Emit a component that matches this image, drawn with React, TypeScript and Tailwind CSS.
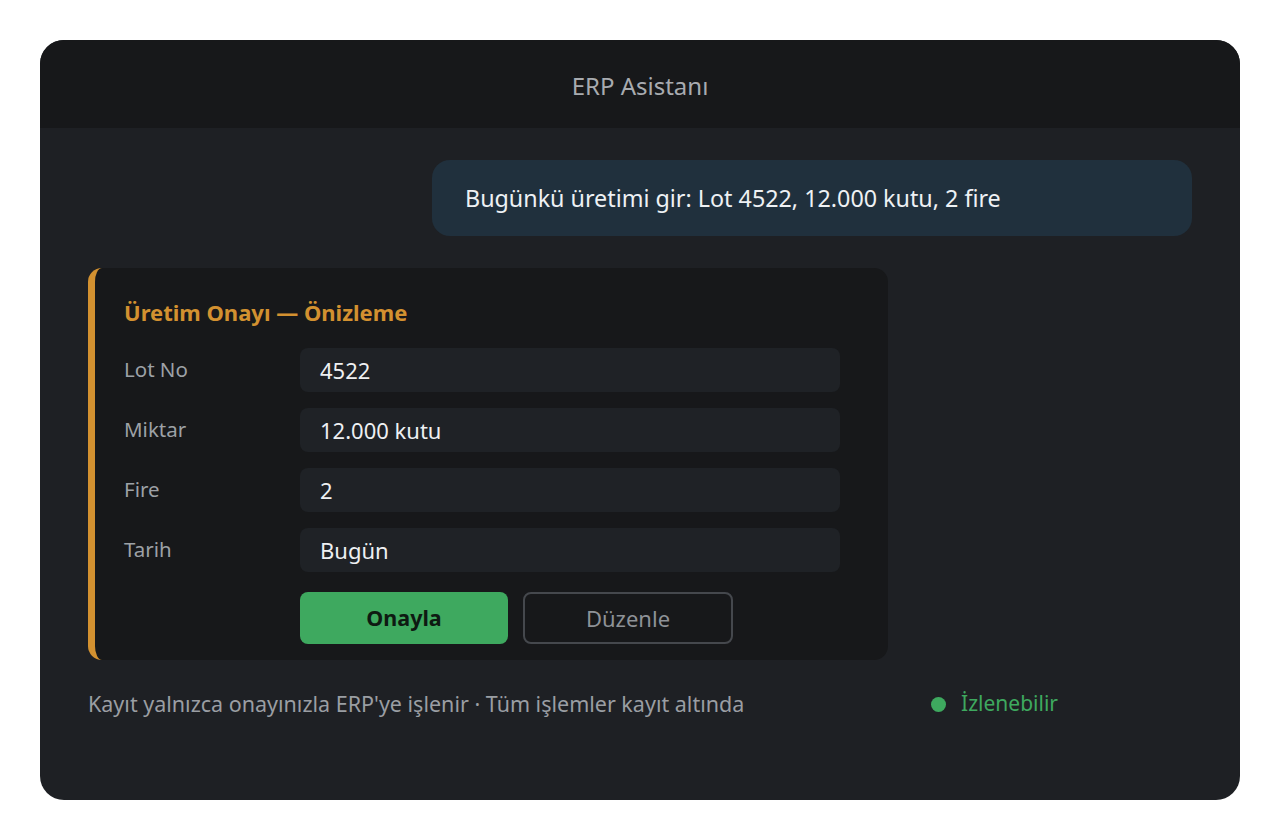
export default function App() {
  const rows = [
    { label: "Lot No", value: "4522" },
    { label: "Miktar", value: "12.000 kutu" },
    { label: "Fire", value: "2" },
    { label: "Tarih", value: "Bugün" },
  ];
  return (
    <div
      className="w-[1280px] h-[840px] bg-white p-10"
      style={{ fontFamily: '"Noto Sans", sans-serif' }}
    >
      <div className="w-full h-full rounded-[24px] overflow-hidden bg-[#1e2024] flex flex-col">
        <div className="h-[88px] shrink-0 bg-[#17181a] flex items-center justify-center">
          <span className="text-[24px] text-[#a8abb0] leading-none mt-[3px]">ERP Asistanı</span>
        </div>
        <div className="flex flex-col px-12 pt-8">
          <div className="flex justify-end">
            <div className="w-[760px] h-[76px] rounded-[18px] bg-[#20303d] flex items-center px-[33px]">
              <span className="text-[23.3px] text-[#eef1f4] leading-none mt-[2px]">
                Bugünkü üretimi gir: Lot 4522, 12.000 kutu, 2 fire
              </span>
            </div>
          </div>
          <div className="mt-8 w-[800px] rounded-[14px] border-l-[7px] border-[#d39130] bg-[#17181a] pl-[29px] pr-12 pt-[28px] pb-4">
            <div className="text-[22px] font-bold text-[#d39130] leading-[32px]">
              Üretim Onayı — Önizleme
            </div>
            <div className="mt-[20px] flex flex-col gap-4">
              {rows.map((r) => (
                <div key={r.label} className="flex items-center">
                  <div className="w-[176px] text-[20.5px] text-[#9da1a6] -mt-[2px]">
                    {r.label}
                  </div>
                  <div className="flex-1 h-[44px] rounded-[8px] bg-[#1f2226] flex items-center px-5">
                    <span className="text-[22px] text-[#eef0f2]">{r.value}</span>
                  </div>
                </div>
              ))}
            </div>
            <div className="mt-[20px] flex gap-[15px] pl-[176px]">
              <button className="w-[208px] h-[52px] rounded-[8px] bg-[#3ea95f] text-[21.5px] font-bold text-[#0e1a12]">
                Onayla
              </button>
              <button className="w-[210px] h-[52px] rounded-[8px] border-2 border-[#45484d] text-[22px] text-[#8e9297]">
                Düzenle
              </button>
            </div>
          </div>
          <div className="mt-[28px] w-[970px] flex items-center justify-between">
            <span className="text-[21.5px] text-[#9a9ea3]">
              Kayıt yalnızca onayınızla ERP'ye işlenir · Tüm işlemler kayıt altında
            </span>
            <span className="flex items-center gap-[15px] text-[21px] text-[#3ea95f]">
              <span className="w-[15px] h-[15px] rounded-full bg-[#3ea95f]" />
              İzlenebilir
            </span>
          </div>
        </div>
      </div>
    </div>
  );
}
